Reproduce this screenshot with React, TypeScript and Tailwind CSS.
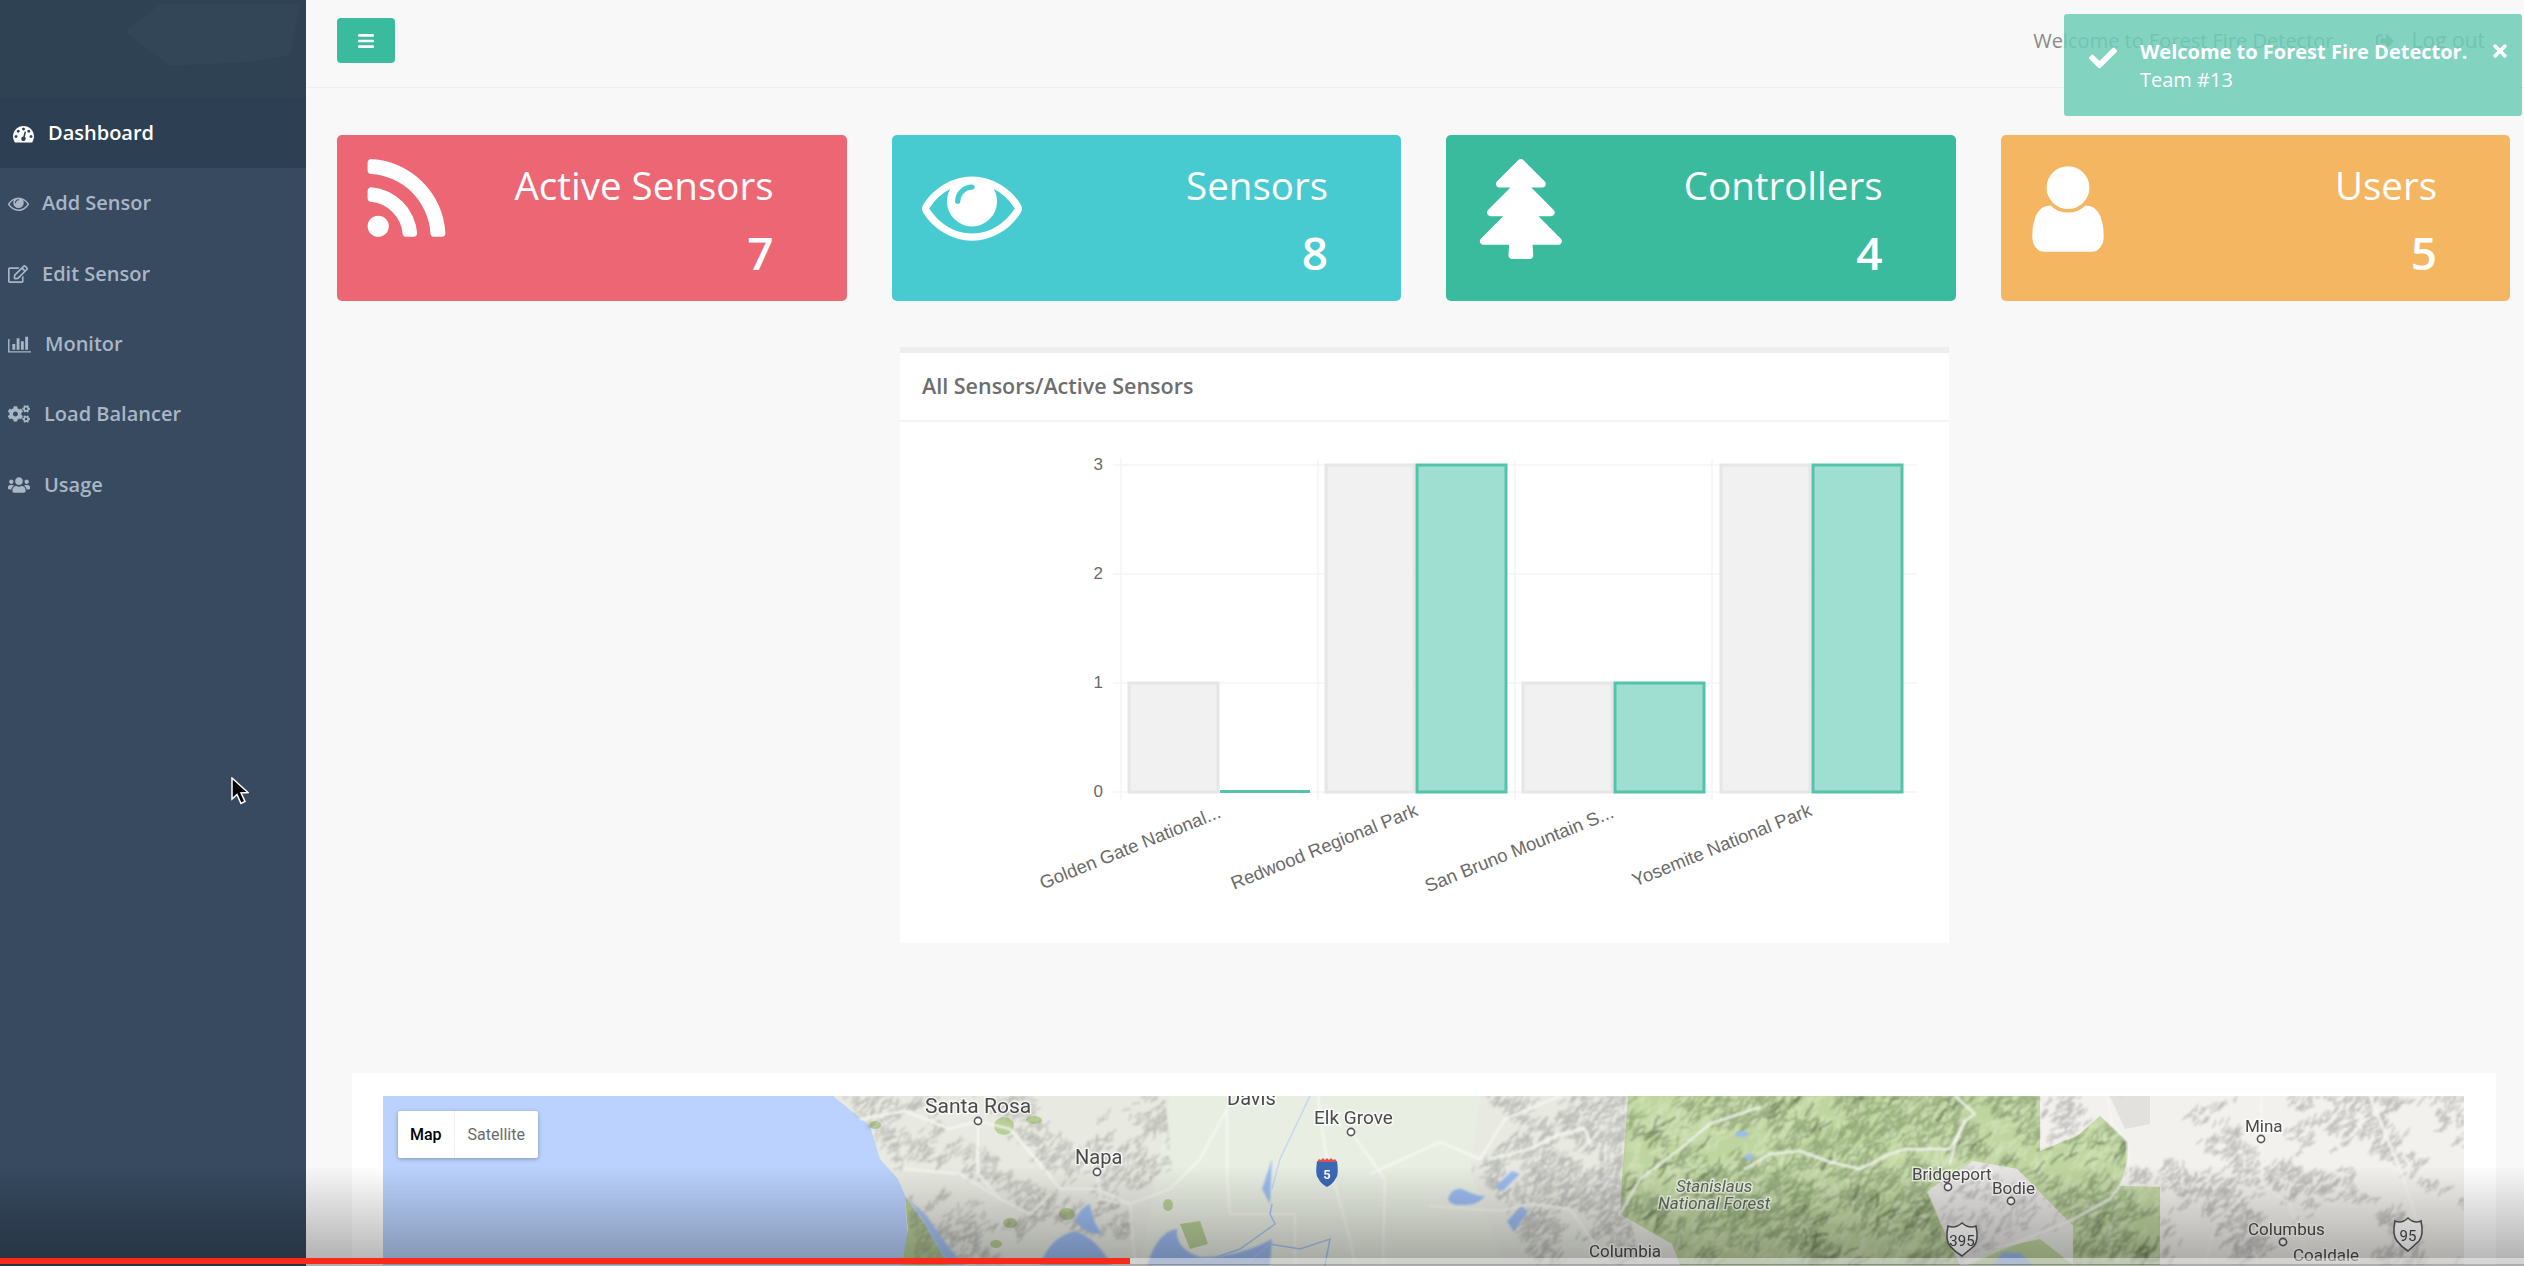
import { FaBars, FaCheck, FaCogs, FaRegEdit, FaSignOutAlt, FaTimes, FaUsers } from "react-icons/fa";

type Pt = [number, number];

const RSS =
	"M576 1344q0 80-56 136t-136 56-136-56-56-136 56-136 136-56 136 56 56 136zm512 123q2 28-17 48-18 21-47 21h-135q-25 0-43-16.500t-20-41.500q-22-229-184.500-391.500t-391.500-184.500q-25-2-41.500-20t-16.500-43v-135q0-29 21-47 17-17 43-17h5q160 13 306 80.500t259 181.500q114 113 181.500 259t80.500 306zm512 2q2 27-18 47-18 20-46 20h-143q-26 0-44.500-17.500t-19.500-42.500q-12-215-101-408.500t-231.500-336-336-231.500-408.500-102q-25-1-42.500-19.500t-17.500-43.500v-143q0-28 20-46 18-18 44-18h3q262 13 501.500 120t425.500 294q187 186 294 425.500t120 501.500z";
const EYE =
	"M1664 960q-152-236-381-353 61 104 61 225 0 185-131.500 316.500t-316.500 131.500-316.500-131.500-131.500-316.500q0-121 61-225-229 117-381 353 133 205 333.500 326.500t434.500 121.500 434.500-121.500 333.500-326.500zm-720-384q0-20-14-34t-34-14q-125 0-214.500 89.500t-89.500 214.500q0 20 14 34t34 14 34-14 14-34q0-86 61-147t147-61q20 0 34-14t14-34zm848 384q0 34-20 69-140 230-376.500 368.500t-499.500 138.500-499.500-139-376.500-368q-20-35-20-69t20-69q140-229 376.500-368t499.500-139 499.500 139 376.500 368q20 35 20 69z";
const TREE =
	"M1504 1472q0 26-19 45t-45 19h-462q1 17 6 87.500t5 108.500q0 25-18 42.500t-43 17.500h-320q-25 0-43-17.500t-18-42.500q0-38 5-108.500t6-87.500h-462q-26 0-45-19t-19-45 19-45l402-403h-229q-26 0-45-19t-19-45 19-45l402-403h-197q-26 0-45-19t-19-45 19-45l384-384q19-19 45-19t45 19l384 384q19 19 19 45t-19 45-45 19h-197l402 403q19 19 19 45t-19 45-45 19h-229l402 403q19 19 19 45z";
const USER =
	"M1536 1399q0 109-62.500 187t-150.500 78h-854q-88 0-150.500-78t-62.500-187q0-85 8.500-160.500t31.500-152 58.500-131 94-89 134.500-34.500q131 128 313 128t313-128q76 0 134.500 34.500t94 89 58.500 131 31.500 152 8.500 160.500zm-256-887q0 159-112.500 271.500t-271.500 112.500-271.500-112.500-112.500-271.500 112.500-271.500 271.500-112.500 271.500 112.500 112.500 271.500z";
const GAUGE =
	"M384 1152q0-53-37.500-90.500t-90.500-37.500-90.500 37.500-37.500 90.500 37.500 90.500 90.500 37.500 90.500-37.500 37.500-90.500zm192-448q0-53-37.500-90.500t-90.500-37.500-90.500 37.500-37.500 90.500 37.500 90.500 90.500 37.500 90.500-37.500 37.500-90.500zm428 481l101-382q6-26-7.500-48.500t-38.500-29.500-48 6.500-30 39.500l-101 382q-60 5-107 43.500t-63 98.500q-20 77 20 146t117 89 146-20 89-117q16-60-6-117t-72-91zm660-33q0-53-37.500-90.500t-90.500-37.500-90.500 37.500-37.500 90.500 37.500 90.500 90.500 37.500 90.500-37.500 37.500-90.500zm-640-640q0-53-37.500-90.500t-90.500-37.500-90.500 37.500-37.500 90.500 37.500 90.500 90.500 37.500 90.500-37.500 37.500-90.500zm448 192q0-53-37.500-90.500t-90.500-37.500-90.500 37.500-37.500 90.500 37.500 90.500 90.500 37.500 90.500-37.500 37.500-90.500zm320 448q0 261-141 483-19 29-54 29h-1402q-35 0-54-29-141-221-141-483 0-182 71-348t191-286 286-191 348-71 348 71 286 191 191 286 71 348z";
const BARS =
	"M640 896v512h-256v-512h256zm384-512v1024h-256v-1024h256zm1024 1152v128h-2048v-1216h128v1088h1920zm-640-896v768h-256v-768h256zm384-384v1152h-256v-1152h256z";

function Glyph({ d, className, box = "0 0 1792 1792" }: { d: string; className: string; box?: string }) {
	return (
		<svg viewBox={box} className={className} fill="currentColor">
			<path d={d} />
		</svg>
	);
}

const navItems = [
	{ label: "Add Sensor", gap: "gap-[13px]", icon: <Glyph d={EYE} className="w-[21px] h-[21px]" /> },
	{ label: "Edit Sensor", gap: "gap-[14px]", icon: <FaRegEdit className="w-[20px] h-[20px]" /> },
	{ label: "Monitor", gap: "gap-[14px]", icon: <Glyph d={BARS} box="0 0 2048 1792" className="w-[23px] h-[20px]" /> },
	{ label: "Load Balancer", gap: "gap-[14px]", icon: <FaCogs className="w-[22px] h-[20px]" /> },
	{ label: "Usage", gap: "gap-[14px]", icon: <FaUsers className="w-[22px] h-[20px]" /> },
];

const cards = [
	{ title: "Active Sensors", value: "7", bg: "bg-[#ec6773]", d: RSS, icon: "ml-[20px] mt-[17px] w-[99px] h-[99px]" },
	{ title: "Sensors", value: "8", bg: "bg-[#47cbd0]", d: EYE, icon: "ml-[30px] mt-[20px] w-[100px] h-[100px]" },
	{ title: "Controllers", value: "4", bg: "bg-[#3abb9e]", d: TREE, icon: "ml-[32px] mt-[24px] w-[100px] h-[100px]" },
	{ title: "Users", value: "5", bg: "bg-[#f5b662]", d: USER, icon: "ml-[17px] mt-[24px] w-[100px] h-[100px]" },
];

function StatCard({ card }: { card: (typeof cards)[number] }) {
	return (
		<div className={`flex justify-between h-[166px] rounded-[5px] text-white ${card.bg}`}>
			<Glyph d={card.d} className={card.icon} />
			<div className="pr-[73px] pt-[28px] text-right">
				<div className="text-[38.5px] leading-[44px]">{card.title}</div>
				<div className="mt-[17px] text-[46px] leading-[56px] font-semibold">{card.value}</div>
			</div>
		</div>
	);
}

// chart data is drawn in page pixels, offset by the viewBox
const chartBars = [
	[1129, 1218, 682, "gray"],
	[1326, 1414, 464, "gray"],
	[1523, 1612, 682, "gray"],
	[1721, 1810, 464, "gray"],
	[1417, 1506, 464, "green"],
	[1615, 1704, 682, "green"],
	[1813, 1902, 464, "green"],
] as const;

const chartLabels = [
	["Golden Gate National...", 1222, 816],
	["Redwood Regional Park", 1419, 814],
	["San Bruno Mountain S...", 1615, 816],
	["Yosemite National Park", 1813, 814],
] as const;

function BarChart() {
	return (
		<svg viewBox="900 421 1049 522" className="block w-[1049px] h-[522px]">
			<g stroke="#f4f4f4" strokeWidth="1.5">
				{[464, 573, 682, 791].map((y) => (
					<line key={y} x1="1113" x2="1917" y1={y} y2={y} />
				))}
				{[1121, 1318, 1515, 1712].map((x) => (
					<line key={x} x1={x} x2={x} y1="458" y2="799" />
				))}
			</g>
			{chartBars.map(([x1, x2, y, kind]) => (
				<rect
					key={x1}
					x={x1}
					y={y}
					width={x2 - x1}
					height={791 - y}
					fill={kind === "gray" ? "#f1f1f1" : "#9fdfd1"}
					stroke={kind === "gray" ? "#e6e6e6" : "#55c2a9"}
					strokeWidth="3"
				/>
			))}
			<rect x="1220" y="789" width="90" height="3" fill="#55c2a9" />
			<g fontFamily="'Liberation Sans', sans-serif" fill="#6a6a6a">
				{[3, 2, 1, 0].map((n, i) => (
					<text key={n} x="1103" y={469 + i * 109} fontSize="17" textAnchor="end">
						{n}
					</text>
				))}
				{chartLabels.map(([text, x, y]) => (
					<text key={text} x={x} y={y} fontSize="18.5" textAnchor="end" transform={`rotate(-22 ${x} ${y})`}>
						{text}
					</text>
				))}
			</g>
		</svg>
	);
}

const coastRange: Pt[] = [[840, 1097], [1165, 1097], [1172, 1170], [1125, 1200], [1145, 1255], [1040, 1222], [1000, 1266], [915, 1266], [905, 1190], [880, 1150]];
const sierra: Pt[] = [[1480, 1097], [1628, 1097], [1622, 1180], [1640, 1266], [1530, 1266], [1505, 1210], [1470, 1170], [1520, 1130]];
const forest: Pt[] = [[1628, 1097], [2040, 1097], [2040, 1152], [2077, 1137], [2100, 1117], [2128, 1143], [2128, 1160], [2120, 1187], [2160, 1188], [2160, 1266], [2073, 1266], [2073, 1227], [2017, 1170], [1973, 1162], [1927, 1193], [1940, 1223], [1960, 1266], [1680, 1266], [1672, 1245], [1620, 1215], [1622, 1180]];
const bodie: Pt[] = [[1930, 1190], [1973, 1162], [2017, 1170], [2073, 1227], [1995, 1250], [1960, 1266], [1940, 1223]];
const desert: Pt[] = [[2040, 1097], [2464, 1097], [2464, 1266], [2160, 1266], [2160, 1188], [2120, 1187], [2128, 1143], [2100, 1117], [2077, 1137], [2040, 1152]];

function toPoints(poly: Pt[]) {
	return poly.map((p) => p.join(",")).join(" ");
}

function inside(poly: Pt[], x: number, y: number) {
	let hit = false;
	for (let i = 0, j = poly.length - 1; i < poly.length; j = i++) {
		const [xi, yi] = poly[i];
		const [xj, yj] = poly[j];
		if (yi > y !== yj > y && x < ((xj - xi) * (y - yi)) / (yj - yi) + xi) hit = !hit;
	}
	return hit;
}

// relief shading: short wandering strokes, kept where a warped wave field is high so they form ridge lines
function ridges(poly: Pt[], count: number, seed: number, threshold: number, len: number) {
	let s = seed;
	const rnd = () => {
		s = (s * 16807) % 2147483647;
		return s / 2147483647;
	};
	const xs = poly.map((p) => p[0]);
	const minX = Math.min(...xs);
	const maxX = Math.max(...xs);
	let d = "";
	for (let n = 0; n < count; n++) {
		let x = minX + rnd() * (maxX - minX);
		let y = 1097 + rnd() * 169;
		if (!inside(poly, x, y)) continue;
		const wx = x + 26 * Math.sin(y * 0.047 + seed) + 11 * Math.sin(y * 0.19 + x * 0.03);
		const wy = y + 18 * Math.sin(x * 0.037 + seed * 2);
		const band =
			Math.sin(wx * 0.11 + wy * 0.07) * 0.7 + Math.sin(wx * 0.043 - wy * 0.061) + Math.sin(wx * 0.017 + wy * 0.029 + seed) * 0.6;
		if (band < threshold + (rnd() - 0.5) * 0.7) continue;
		let a = -1.05 + rnd() * 0.5;
		d += `M${x.toFixed(1)} ${y.toFixed(1)}`;
		for (let k = 0; k < 3; k++) {
			a += (rnd() - 0.5) * 0.8;
			x += Math.cos(a) * len;
			y += Math.sin(a) * len;
			d += `L${x.toFixed(1)} ${y.toFixed(1)}`;
		}
	}
	return d;
}

const reliefCoast = ridges(coastRange, 3400, 11, -0.2, 2.5);
const reliefSierra = ridges(sierra, 1700, 23, -0.5, 3);
const reliefForestLight = ridges(forest, 2400, 41, -1.2, 4);
const reliefForestDark = ridges(forest, 4200, 37, -0.3, 3.5);
const reliefForestDeep = ridges(forest, 1000, 59, 0.8, 5);
const reliefBodie = ridges(bodie, 500, 53, -0.6, 2.5);
const reliefDesert = ridges(desert, 4200, 67, 0.3, 2.5);

const roads = [
	"M860 1120 L905 1112 L950 1130 L978 1122 L1010 1130 L1040 1165 L1060 1190 L1097 1190 L1130 1205 L1170 1190 L1200 1160 L1227 1110",
	"M905 1170 L960 1175 L1000 1200 L1030 1215 L1050 1195",
	"M978 1122 L978 1175 L1000 1200",
	"M1130 1205 L1135 1266",
	"M1097 1173 L1100 1200 L1130 1205",
	"M1227 1110 L1227 1180 L1230 1215 L1295 1215 L1295 1266",
	"M1318 1097 L1325 1150 L1350 1240 L1355 1266",
	"M1351 1133 L1385 1180 L1383 1266",
	"M1370 1175 L1440 1143 L1480 1160 L1505 1120 L1560 1097",
	"M1430 1207 L1500 1212 L1530 1205 L1570 1210 L1610 1266",
	"M1490 1160 L1530 1150 L1560 1135 L1585 1130 L1590 1145",
	"M1620 1215 L1640 1180 L1680 1150 L1710 1125 L1760 1108",
	"M1745 1170 L1770 1155 L1800 1152 L1830 1163 L1860 1170 L1890 1155 L1905 1150 L1950 1150 L1965 1122 L1975 1115 L1955 1097",
	"M1965 1122 L1955 1145 L1950 1165",
	"M2107 1097 L2112 1125 L2128 1143 L2128 1175 L2110 1200 L2070 1222 L2000 1250 L1965 1266",
	"M2261 1097 L2262 1165 L2262 1185 L2240 1200 L2215 1225 L2205 1266",
	"M2262 1185 L2290 1205 L2310 1266",
	"M2370 1097 L2400 1170 L2420 1230",
];

function MapLabel({ x, y, size = 19, italic, fill = "#4a4a4a", children }: { x: number; y: number; size?: number; italic?: boolean; fill?: string; children: string }) {
	return (
		<text x={x} y={y} fontSize={size} fontStyle={italic ? "italic" : "normal"} fill={fill} stroke="#ffffff" strokeOpacity="0.7" strokeWidth="3" paintOrder="stroke">
			{children}
		</text>
	);
}

function Town({ x, y }: { x: number; y: number }) {
	return <circle cx={x} cy={y} r="3.6" fill="#fff" stroke="#555" strokeWidth="1.6" />;
}

function UsShield({ x, y, w, children }: { x: number; y: number; w: number; children: string }) {
	return (
		<g>
			<path
				d={`M${x - w / 2} ${y - 14} q${w / 4} 3 ${w / 2} -3 q${w / 4} 6 ${w / 2} 3 q3 14 -2 20 q-${w / 4} 6 -${w / 2 - 2} 10 q-${w / 4} -4 -${w / 2 - 2} -10 q-5 -6 -2 -20z`}
				fill="#fff"
				stroke="#555"
				strokeWidth="1.6"
			/>
			<text x={x} y={y + 6} fontSize="15" textAnchor="middle" fill="#444">
				{children}
			</text>
		</g>
	);
}

function TerrainMap() {
	return (
		<svg viewBox="383 1097 2081 169" className="block w-[2081px] h-[169px]" fontFamily="Roboto, sans-serif">
			<defs>
				<filter id="soft" x="0" y="0" width="1" height="1">
					<feGaussianBlur stdDeviation="0.8" />
				</filter>
				<clipPath id="clip-coast">
					<polygon points={toPoints(coastRange)} />
				</clipPath>
				<clipPath id="clip-sierra">
					<polygon points={toPoints(sierra)} />
				</clipPath>
				<clipPath id="clip-forest">
					<polygon points={toPoints(forest)} />
				</clipPath>
				<clipPath id="clip-bodie">
					<polygon points={toPoints(bodie)} />
				</clipPath>
				<clipPath id="clip-desert">
					<polygon points={toPoints(desert)} />
				</clipPath>
			</defs>
			<rect x="383" y="1097" width="2081" height="169" fill="#bad2fd" />
			<polygon points="833,1097 2464,1097 2464,1266 902,1266 908,1250 905,1197 898,1180 880,1160 870,1127" fill="#e8eae2" />
			<polygon points="1170,1097 1480,1097 1470,1170 1505,1266 1140,1266" fill="#e9eee3" />
			<polygon points={toPoints(desert)} fill="#f3f1ed" />
			<polygon points="2110,1097 2150,1097 2150,1125 2125,1130" fill="#e3e1dd" />
			<polygon points={toPoints(forest)} fill="#bfd59f" />
			<polygon points={toPoints(bodie)} fill="#e8e6e4" />
			<polygon points="1995,1250 2040,1240 2073,1266 1965,1266" fill="#bfd59f" />
			<g fill="#b8cf98">
				<polygon points="905,1197 925,1225 948,1266 902,1266 908,1230" />
				<ellipse cx="875" cy="1126" rx="6" ry="4" />
				<ellipse cx="1004" cy="1127" rx="10" ry="9" />
				<ellipse cx="1034" cy="1121" rx="8" ry="4" />
				<ellipse cx="1010" cy="1224" rx="7" ry="5" />
				<ellipse cx="1067" cy="1215" rx="8" ry="6" />
				<ellipse cx="1168" cy="1206" rx="5" ry="6" />
				<polygon points="1180,1225 1200,1222 1208,1245 1190,1250" />
				<ellipse cx="996" cy="1245" rx="6" ry="4" />
			</g>
			<g filter="url(#soft)" fill="none" strokeLinecap="round">
				<path d={reliefCoast} clipPath="url(#clip-coast)" stroke="#7c7c78" strokeOpacity="0.4" strokeWidth="1.2" />
				<path d={reliefSierra} clipPath="url(#clip-sierra)" stroke="#77777a" strokeOpacity="0.4" strokeWidth="1.2" />
				<path d={reliefForestLight} clipPath="url(#clip-forest)" stroke="#e2ecce" strokeOpacity="0.55" strokeWidth="1.4" />
				<path d={reliefForestDark} clipPath="url(#clip-forest)" stroke="#5c7349" strokeOpacity="0.45" strokeWidth="1.4" />
				<path d={reliefForestDeep} clipPath="url(#clip-forest)" stroke="#47593a" strokeOpacity="0.5" strokeWidth="2" />
				<path d={reliefBodie} clipPath="url(#clip-bodie)" stroke="#777" strokeOpacity="0.4" strokeWidth="1.2" />
				<path d={reliefDesert} clipPath="url(#clip-desert)" stroke="#6f6f6f" strokeOpacity="0.38" strokeWidth="1.3" />
				<g stroke="#f7f8f3" strokeWidth="2" strokeLinejoin="round">
					{roads.map((d) => (
						<path key={d} d={d} />
					))}
				</g>
			</g>
			<g fill="#9cbcf0" filter="url(#soft)">
				<polygon points="908,1200 925,1215 950,1250 965,1266 948,1266 925,1225" fill="#a6c3f4" />
				<path d="M1040 1266 Q1050 1238 1075 1232 Q1095 1238 1112 1266 Z" />
				<path d="M1075 1222 Q1080 1208 1090 1205 Q1092 1222 1102 1235 Q1085 1236 1075 1222 Z" />
				<path d="M1147 1266 Q1158 1232 1177 1230 Q1175 1250 1200 1258 Q1240 1258 1272 1240 L1270 1266 Z" />
				<polygon points="1262,1190 1272,1160 1270,1205" />
				<path d="M1448 1200 Q1452 1188 1462 1190 Q1478 1198 1485 1197 Q1478 1207 1460 1206 Q1450 1206 1448 1200 Z" />
				<polygon points="1507,1222 1522,1208 1528,1212 1514,1233" />
				<polygon points="1495,1188 1512,1172 1520,1175 1502,1192" />
				<ellipse cx="1742" cy="1135" rx="7" ry="3" />
				<ellipse cx="1749" cy="1158" rx="4" ry="3" />
				<polygon points="1993,1266 2003,1253 2020,1254 2033,1266" />
			</g>
			<g fill="none" stroke="#a9c4f1" strokeWidth="1.5">
				<path d="M1272 1205 L1270 1215 L1275 1225 L1240 1250 L1205 1262" />
				<path d="M1310 1097 L1280 1160 L1272 1190" stroke="#c6d6ef" />
				<path d="M1245 1266 L1270 1245 L1300 1250 L1330 1240 L1325 1266" />
			</g>
			<MapLabel x={925} y={1114} size={21}>Santa Rosa</MapLabel>
			<Town x={978} y={1122} />
			<MapLabel x={1227} y={1106} size={20}>Davis</MapLabel>
			<MapLabel x={1314} y={1125}>Elk Grove</MapLabel>
			<Town x={1351} y={1133} />
			<MapLabel x={1075} y={1165} size={20}>Napa</MapLabel>
			<Town x={1097} y={1173} />
			<MapLabel x={1676} y={1193} size={17} italic fill="#5c6b52">Stanislaus</MapLabel>
			<MapLabel x={1658} y={1210} size={17} italic fill="#5c6b52">National Forest</MapLabel>
			<MapLabel x={1589} y={1258} size={17}>Columbia</MapLabel>
			<MapLabel x={1912} y={1181} size={17}>Bridgeport</MapLabel>
			<Town x={1948} y={1188} />
			<MapLabel x={1992} y={1195} size={17}>Bodie</MapLabel>
			<Town x={2011} y={1202} />
			<MapLabel x={2245} y={1133} size={17}>Mina</MapLabel>
			<Town x={2261} y={1140} />
			<MapLabel x={2248} y={1236} size={17}>Columbus</MapLabel>
			<Town x={2283} y={1243} />
			<MapLabel x={2293} y={1262} size={17}>Coaldale</MapLabel>
			<g>
				<path d="M1317 1162 q10 2 20 0 q2 14 -1 17 q-3 6 -9 9 q-6 -3 -9 -9 q-3 -3 -1 -17z" fill="#3b67b5" />
				<path d="M1317 1163 l2 -3 l2 1 l2 -2 l2 2 l2 -2 l2 2 l2 -2 l2 2 l2 -1 l2 3z" fill="#d9534f" />
				<text x="1327" y="1180" fontSize="13" fontWeight="700" textAnchor="middle" fill="#fff">5</text>
			</g>
			<UsShield x={1962} y={1241} w={28}>395</UsShield>
			<UsShield x={2408} y={1236} w={26}>95</UsShield>
		</svg>
	);
}

export default function App() {
	return (
		<div className="relative flex w-[2524px] h-[1266px] overflow-hidden bg-[#f8f8f8] font-['Open_Sans',sans-serif]">
			<aside className="flex flex-col w-[306px] shrink-0 bg-[#374a5f] text-[20px] font-semibold text-[#a9b6c6]">
				<div className="relative h-[98px] bg-[#2f4254] overflow-hidden">
					<svg viewBox="0 0 306 98" className="block w-full h-full">
						<polygon points="125,32 160,4 300,4 290,55 250,62 170,66" fill="#324658" />
					</svg>
				</div>
				<div className="flex items-center gap-[14px] h-[70px] pl-[13px] bg-[#2d4053] text-white">
					<Glyph d={GAUGE} className="w-[21px] h-[21px]" />
					Dashboard
				</div>
				{navItems.map((item) => (
					<div key={item.label} className={`flex items-center h-[70.4px] pl-[8px] ${item.gap}`}>
						{item.icon}
						{item.label}
					</div>
				))}
			</aside>

			<main className="flex-1 min-w-0">
				<header className="flex justify-between h-[88px] pl-[31px] border-b border-[#eeeeee]">
					<button className="flex items-center justify-center w-[58px] h-[45px] mt-[18px] rounded-[4px] bg-[#3abb9e] text-white">
						<FaBars className="w-[18px] h-[18px]" />
					</button>
					<div className="flex items-center gap-[42px] pr-[39px] pb-[5px] text-[20px] text-[#8a8a8a]">
						<span>Welcome to Forest Fire Detector</span>
						<span className="flex items-center gap-[18px] text-[21px]">
							<FaSignOutAlt className="w-[18px] h-[18px]" />
							Log out
						</span>
					</div>
				</header>

				<section className="grid grid-cols-4 gap-x-[45px] mt-[47px] pl-[31px] pr-[14px]">
					{cards.map((card) => (
						<StatCard key={card.title} card={card} />
					))}
				</section>

				<section className="w-[1049px] h-[596px] mt-[46px] ml-[594px] border-t-[6px] border-[#eeeeee] bg-white">
					<h3 className="flex items-center h-[69px] pl-[22px] border-b-2 border-[#f3f3f3] text-[21.5px] font-semibold text-[#6e6e6e]">
						All Sensors/Active Sensors
					</h3>
					<BarChart />
				</section>

				<section className="w-[2144px] h-[192px] mt-[130px] ml-[46px] pt-[23px] pl-[31px] bg-white">
					<div className="relative w-[2081px] h-[169px]">
						<TerrainMap />
						<div className="absolute left-[15px] top-[15px] flex h-[47px] rounded-[2px] bg-white shadow-[0_1px_4px_rgba(0,0,0,0.3)] font-['Roboto',sans-serif] text-[16px]">
							<span className="flex items-center px-[12px] border-r border-[#eeeeee] font-medium text-black">Map</span>
							<span className="flex items-center px-[13px] text-[#6b6b6b]">Satellite</span>
						</div>
					</div>
				</section>
			</main>

			{/* toast sits over the header text, which shows through faintly */}
			<div className="absolute left-[2064px] top-[14px] w-[458px] h-[102px] rounded-[3px] bg-[#6fcdb7]/85 text-[20px] text-white">
				<FaCheck className="absolute left-[22px] top-[30px] w-[34px] h-[28px]" />
				<div className="absolute left-[76px] top-[23px] font-bold leading-[30px]">Welcome to Forest Fire Detector.</div>
				<div className="absolute left-[76px] top-[51px] leading-[30px]">Team #13</div>
				<FaTimes className="absolute left-[426px] top-[27px] w-[20px] h-[20px]" />
			</div>

			{/* video player chrome on top of the recording */}
			<div className="absolute inset-x-0 bottom-0 h-[100px] bg-gradient-to-b from-transparent to-black/30" />
			<div className="absolute inset-x-0 bottom-[2px] h-[6px] bg-white/45">
				<div className="w-[1130px] h-full bg-[#f92a1a]" />
			</div>

			<svg viewBox="0 0 18 28" className="absolute left-[231px] top-[777px] w-[18px] h-[28px]">
				<path d="M1 1 L1 22 L6 17.500 L10 26.500 L14 24.500 L10 16 L17 15.500 Z" fill="#000" stroke="#fff" strokeWidth="1.5" />
			</svg>
		</div>
	);
}
